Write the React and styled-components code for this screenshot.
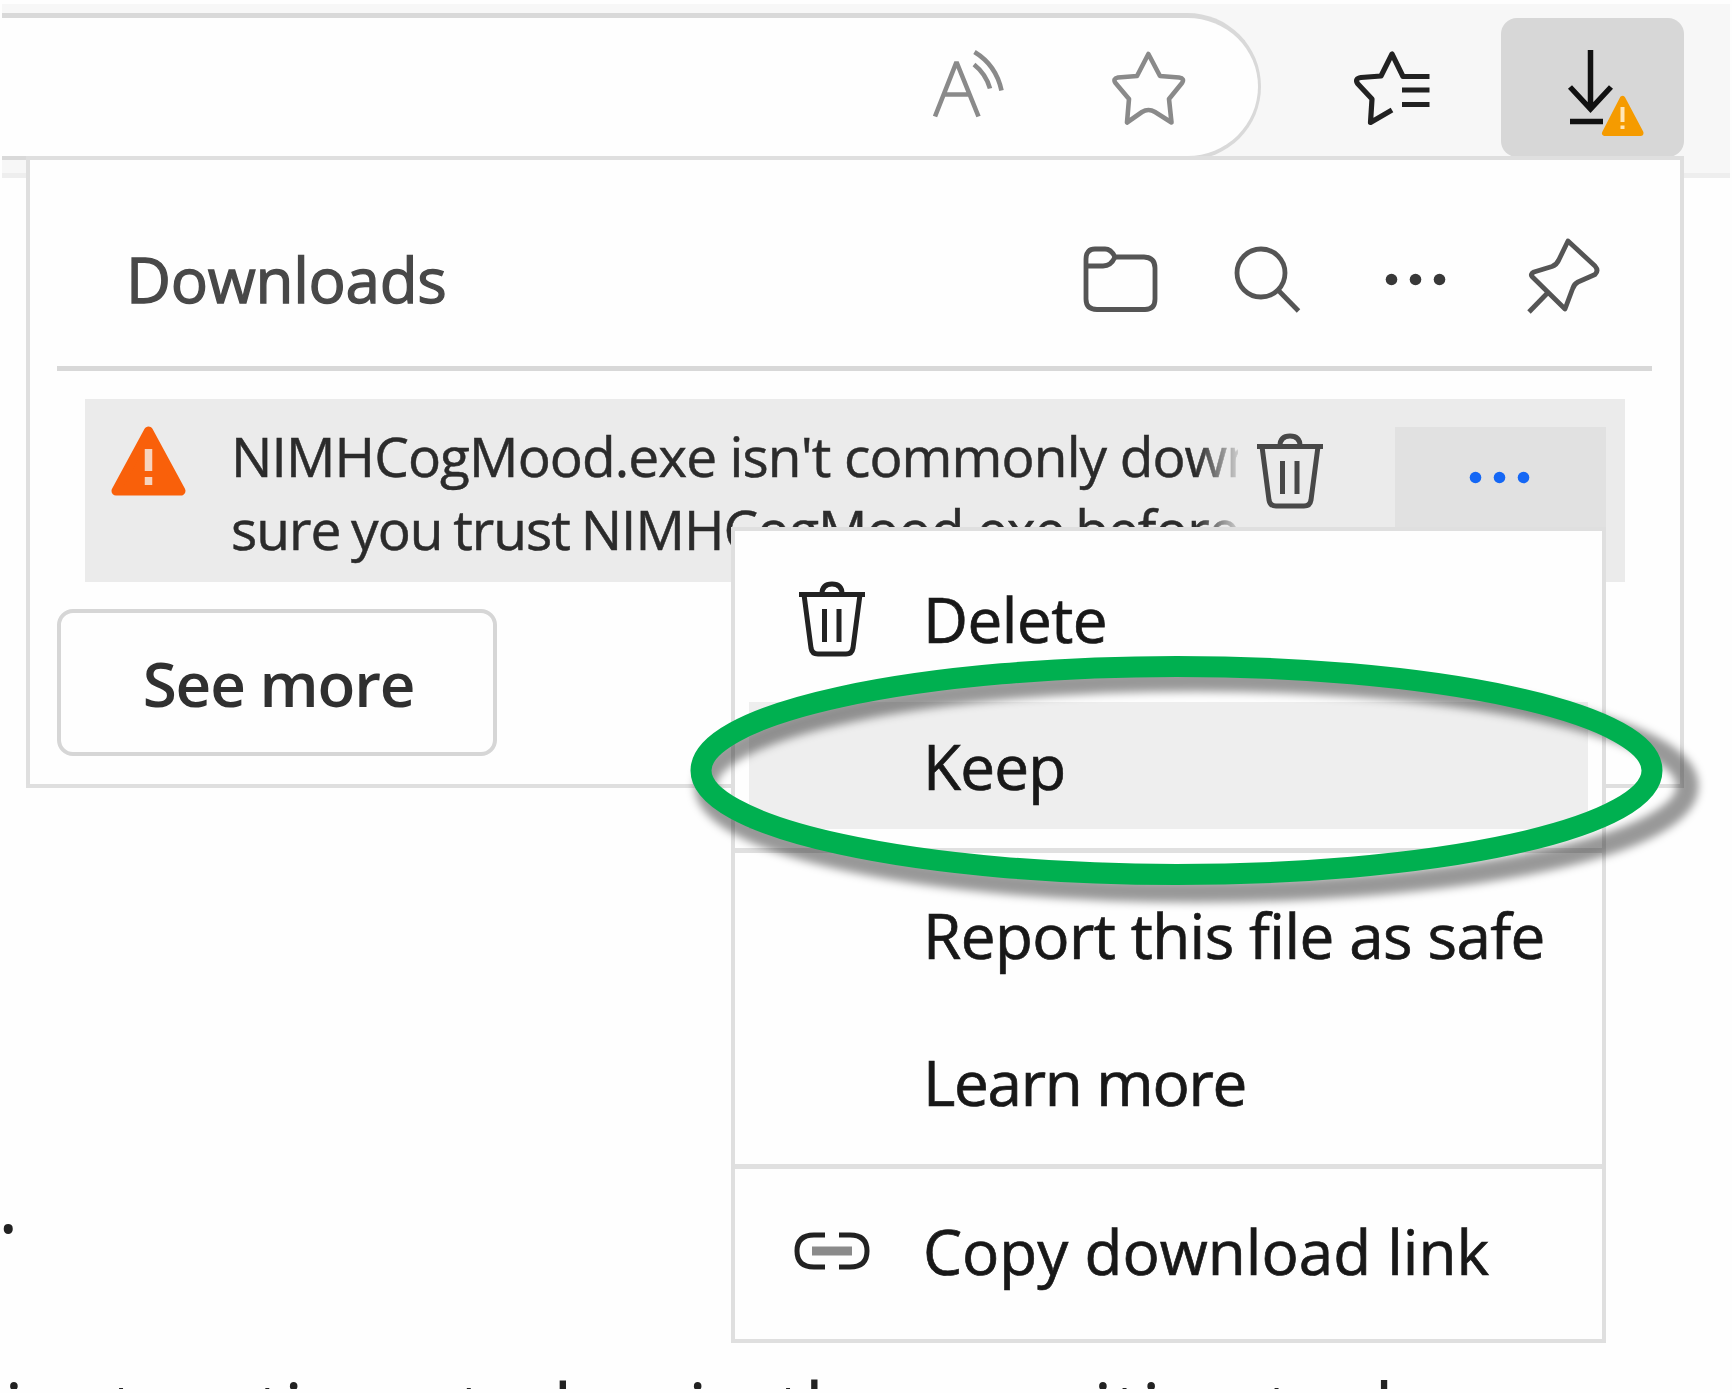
import React from "react";
import styled, { createGlobalStyle } from "styled-components";

const GlobalStyle = createGlobalStyle`
  *, *::before, *::after { box-sizing: border-box; }
  html, body { margin: 0; padding: 0; background: #fefefe; overflow: hidden; }
  body { font-family: "Open Sans", "Noto Sans", sans-serif; }
  svg { display: block; flex: none; overflow: visible; }
`;

const Page = styled.main`
  position: relative;
  width: 1732px;
  height: 1393px;
  padding: 4px 2px;
  overflow: hidden;
  background: #fefefe;
`;

const Viewport = styled.div`
  display: flex;
  flex-direction: column;
  height: 1385px;
  overflow: hidden;
`;

/* ---------- browser toolbar ---------- */

const Toolbar = styled.header`
  display: flex;
  flex: none;
  align-items: flex-start;
  height: 174px;
  padding-top: 9px;
  background: #f7f7f7;
  border-bottom: 5px solid #eeeeee;
`;

const AddressBar = styled.div`
  display: flex;
  align-items: center;
  justify-content: flex-end;
  gap: 98px;
  width: 1259px;
  height: 147px;
  padding-right: 69px;
  background: #fefefe;
  border: solid #d9d9d9;
  border-width: 5px 3px 4px 0;
  border-radius: 0 74px 74px 0;
`;

const FavoritesButton = styled.div`
  display: flex;
  align-items: center;
  height: 147px;
  margin-left: 90px;
`;

const DownloadButton = styled.div`
  width: 183px;
  height: 139px;
  margin: 5px 0 0 66px;
  padding: 28px 0 0 64px;
  background: #d7d7d7;
  border-radius: 16px;
`;

/* ---------- document behind the popup ---------- */

const Article = styled.section`
  padding-top: 924px;
  color: #222;
  font-size: 78px;
  line-height: 202px;
  white-space: pre;
`;

const Line = styled.p`
  margin: ${(p) => p.$gap || 0}px 0 0 ${(p) => p.$indent}px;
  letter-spacing: ${(p) => p.$tracking || 0}px;
`;

/* ---------- downloads popup ---------- */

const Popup = styled.section`
  position: absolute;
  top: 156px;
  left: 26px;
  width: 1658px;
  height: 632px;
  background: #fefefe;
  border: 4px solid #dfdfdf;
`;

const PopupHeader = styled.div`
  display: flex;
  align-items: center;
  justify-content: space-between;
  height: 211px;
  margin: 0 28px 0 27px;
  padding: 32px 48px 0 69px;
  border-bottom: 5px solid #d8d8d8;
`;

const Title = styled.h1`
  margin: 0;
  color: #484848;
  font-size: 62px;
  font-weight: 400;
  line-height: 84px;
  letter-spacing: -0.3px;
  -webkit-text-stroke: 1.3px #484848;
`;

const HeaderActions = styled.div`
  display: grid;
  grid-template-columns: 80px 80px 80px 80px;
  column-gap: 68px;
`;

const DownloadItem = styled.div`
  display: flex;
  align-items: flex-start;
  height: 183px;
  margin: 28px 55px 0;
  padding-left: 26px;
  background: #ebebeb;
`;

const ItemIcon = styled.div`
  margin: 26px 44px 0 0;
`;

const ItemMessage = styled.div`
  flex: none;
  width: 1007px;
  margin-top: 20px;
  overflow: hidden;
  color: #2b2b2b;
  font-size: 55px;
  line-height: 73px;
  white-space: nowrap;
  -webkit-text-stroke: 0.5px #2b2b2b;
  mask-image: linear-gradient(to right, #000 965px, transparent 1015px);
`;

const MessageLine = styled.div`
  letter-spacing: ${(p) => p.$tracking}px;
  word-spacing: ${(p) => p.$wordGap || 0}px;
`;

const ItemDelete = styled.div`
  margin: 33px 0 0 18px;
`;

const ItemMore = styled.div`
  width: 211px;
  height: 155px;
  margin: 28px 0 0 71px;
  padding: 10px 0 0 65px;
  background: #e1e1e1;
`;

const SeeMoreButton = styled.button`
  display: flex;
  align-items: center;
  justify-content: center;
  width: 440px;
  height: 147px;
  margin: 27px 0 0 27px;
  padding: 0 0 0 3px;
  color: #303030;
  background: #fefefe;
  border: 4px solid #d6d6d6;
  border-radius: 16px;
  font: 600 62px/84px "Open Sans", "Noto Sans", sans-serif;
  letter-spacing: -1.2px;
`;

/* ---------- context menu ---------- */

const Menu = styled.ul`
  position: absolute;
  top: 527px;
  left: 731px;
  width: 875px;
  height: 816px;
  margin: 0;
  padding: 14px 0 0;
  list-style: none;
  background: #fefefe;
  border: 4px solid #dfdfdf;
`;

const MenuItem = styled.li`
  display: flex;
  align-items: center;
  height: 147px;
  margin: 0 14px;
  padding-left: 45px;
  background: ${(p) => (p.$active ? "#eeeeee" : "transparent")};
  background-clip: padding-box;
  border: solid transparent;
  border-width: 10px 0;
`;

const MenuIcon = styled.span`
  display: flex;
  flex: none;
  justify-content: center;
  width: 76px;
  margin-right: 53px;
`;

const MenuLabel = styled.span`
  color: #181818;
  font-size: 62px;
  line-height: 84px;
  letter-spacing: ${(p) => p.$tracking || 0}px;
  white-space: nowrap;
  -webkit-text-stroke: 0.7px #181818;
`;

const MenuSeparator = styled.li`
  height: 5px;
  margin: 9px 0 8px;
  background: #e0e0e0;
`;

const Highlight = styled.svg`
  position: absolute;
  top: 640px;
  left: 670px;
  pointer-events: none;
`;

/* ---------- icons ---------- */

const ReadAloudIcon = () => (
  <svg width="80" height="80" fill="none" stroke="#8a8a8a" strokeWidth="4.6">
    <path d="M4 69.500 25.500 15 47.500 69.500M12 47.500H40" strokeLinejoin="bevel" />
    <path d="M43 17.500Q55 27 59 41.500M43.500 5Q65 18 70.500 43.500" />
  </svg>
);

const StarIcon = () => (
  <svg width="80" height="80" fill="none" stroke="#8a8a8a" strokeWidth="4.6" strokeLinejoin="round">
    <path d="M39.400 7 51 29 70 30.500Q76 31.500 73 36L60 52 62.500 75.500 46 65Q39.400 61 33 65L18 75.500 20 52 6.500 36Q3.500 31.500 9 30.500L28 29Z" />
  </svg>
);

const FavoritesIcon = () => (
  <svg width="84" height="80" fill="none" stroke="#222" strokeWidth="5.2" strokeLinejoin="round">
    <path d="M78.500 29.500H52L41 7 30 29 10 30.500Q3.500 31.500 6.500 36.500L21 52 19.500 75.500 41 63" />
    <path d="M51 43H78.500M51 57.500H78.500" />
  </svg>
);

const DownloadWarningIcon = () => (
  <svg width="84" height="96" fill="none" stroke="#111" strokeWidth="5.500">
    <path d="M25.500 4V63M5 41 25.500 63 46 41" />
    <path d="M5 75.500H38" />
    <path d="M57.500 53 40 87H75.500Z" fill="#f59b00" stroke="#f59b00" strokeWidth="6" strokeLinejoin="round" />
    <path d="M57.500 61V76M57.500 79.500V83" stroke="#ffe6b8" strokeWidth="4" />
  </svg>
);

const FolderIcon = () => (
  <svg width="80" height="80" fill="none" stroke="#555" strokeWidth="4.800" strokeLinejoin="round">
    <path d="M6 20Q6 10 15 10H25Q31 10 35 18H64Q75 18.500 75 29V60Q75 70.500 65 70.500H17Q6 70.500 6 60Z" />
    <path d="M6 27H23Q31 27 35 18" />
  </svg>
);

const SearchIcon = () => (
  <svg width="80" height="80" fill="none" stroke="#555" strokeWidth="4.800">
    <circle cx="33" cy="34" r="24" />
    <path d="M50 51 70.500 72" />
  </svg>
);

const DotsIcon = ({ color }) => (
  <svg width="80" height="80" fill={color}>
    <circle cx="15.500" cy="40.500" r="5.800" />
    <circle cx="39.500" cy="40.500" r="5.800" />
    <circle cx="63.500" cy="40.500" r="5.800" />
  </svg>
);

const PinIcon = () => (
  <svg width="80" height="80" fill="none" stroke="#555" strokeWidth="4.800" strokeLinejoin="round">
    <path d="M44 2 71 27Q75 31.500 71 35.500L54 43Q50 45 48.500 50L41 70 8 37.500Q6 35 10 33L28 27.500Q33 25.500 35 20.500Z" />
    <path d="M23.500 54 5 73" />
  </svg>
);

const WarningIcon = () => (
  <svg width="76" height="72">
    <path d="M37.500 6 70 66H5Z" fill="#f9600a" stroke="#f9600a" strokeWidth="9" strokeLinejoin="round" />
    <path d="M37.500 24V46M37.500 52V60" stroke="#f6d3be" strokeWidth="7.500" />
  </svg>
);

const TrashIcon = ({ color }) => (
  <svg width="68" height="78" fill="none" stroke={color} strokeWidth="5" strokeLinejoin="round">
    <path d="M1 14.500H67M24 14Q24 4 34 4T44 14" />
    <path d="M6 14.500 13 68Q14 74 20 74H48Q54 74 55 68L62 14.500" />
    <path d="M26.500 29V62M41 29V62" />
  </svg>
);

const LinkIcon = () => (
  <svg width="76" height="42" fill="none" stroke="#222" strokeWidth="5">
    <path d="M31 5H20Q3 5 3 21T20 37H31M45 5H56Q73 5 73 21T56 37H45" />
    <path d="M18 21H58" stroke="#8a8a8a" strokeWidth="9" />
  </svg>
);

const menuGroups = [
  [
    { label: "Delete", icon: <TrashIcon color="#222" />, tracking: -0.5 },
    { label: "Keep", active: true, tracking: -0.8 },
  ],
  [
    { label: "Report this file as safe", tracking: -0.6 },
    { label: "Learn more", tracking: -1.3 },
  ],
  [{ label: "Copy download link", icon: <LinkIcon /> }],
];

export default function App() {
  return (
    <>
      <GlobalStyle />
      <Page>
        <Viewport>
          <Toolbar>
            <AddressBar>
              <ReadAloudIcon />
              <StarIcon />
            </AddressBar>
            <FavoritesButton>
              <FavoritesIcon />
            </FavoritesButton>
            <DownloadButton>
              <DownloadWarningIcon />
            </DownloadButton>
          </Toolbar>
          <Article>
            <Line $indent={-4}>.</Line>
            <Line $indent={2} $gap={5} $tracking={0.3}>instructions to begin the cognitive tasks</Line>
          </Article>
        </Viewport>

        <Popup>
          <PopupHeader>
            <Title>Downloads</Title>
            <HeaderActions>
              <FolderIcon />
              <SearchIcon />
              <DotsIcon color="#383838" />
              <PinIcon />
            </HeaderActions>
          </PopupHeader>
          <DownloadItem>
            <ItemIcon>
              <WarningIcon />
            </ItemIcon>
            <ItemMessage>
              <MessageLine $tracking={-0.9}>NIMHCogMood.exe isn't commonly downloaded. Make</MessageLine>
              <MessageLine $tracking={-1} $wordGap={-2.5}>
                sure you trust NIMHCogMood.exe before you open it.
              </MessageLine>
            </ItemMessage>
            <ItemDelete>
              <TrashIcon color="#484848" />
            </ItemDelete>
            <ItemMore>
              <DotsIcon color="#1467f5" />
            </ItemMore>
          </DownloadItem>
          <SeeMoreButton>See more</SeeMoreButton>
        </Popup>

        <Menu>
          {menuGroups.map((group, g) => (
            <React.Fragment key={g}>
              {g > 0 && <MenuSeparator />}
              {group.map((item) => (
                <MenuItem key={item.label} $active={item.active}>
                  <MenuIcon>{item.icon}</MenuIcon>
                  <MenuLabel $tracking={item.tracking}>{item.label}</MenuLabel>
                </MenuItem>
              ))}
            </React.Fragment>
          ))}
        </Menu>

        <Highlight width="1060" height="290" fill="none" strokeWidth="21">
          <defs>
            <filter id="soft" x="-5%" y="-15%" width="110%" height="130%">
              <feGaussianBlur stdDeviation="4.500" />
            </filter>
          </defs>
          <ellipse cx="526.500" cy="146" rx="491" ry="105.500" stroke="#000" strokeOpacity="0.4" strokeWidth="22" filter="url(#soft)" />
          <ellipse cx="506.500" cy="130.500" rx="475.500" ry="104" stroke="#00b050" />
        </Highlight>
      </Page>
    </>
  );
}
